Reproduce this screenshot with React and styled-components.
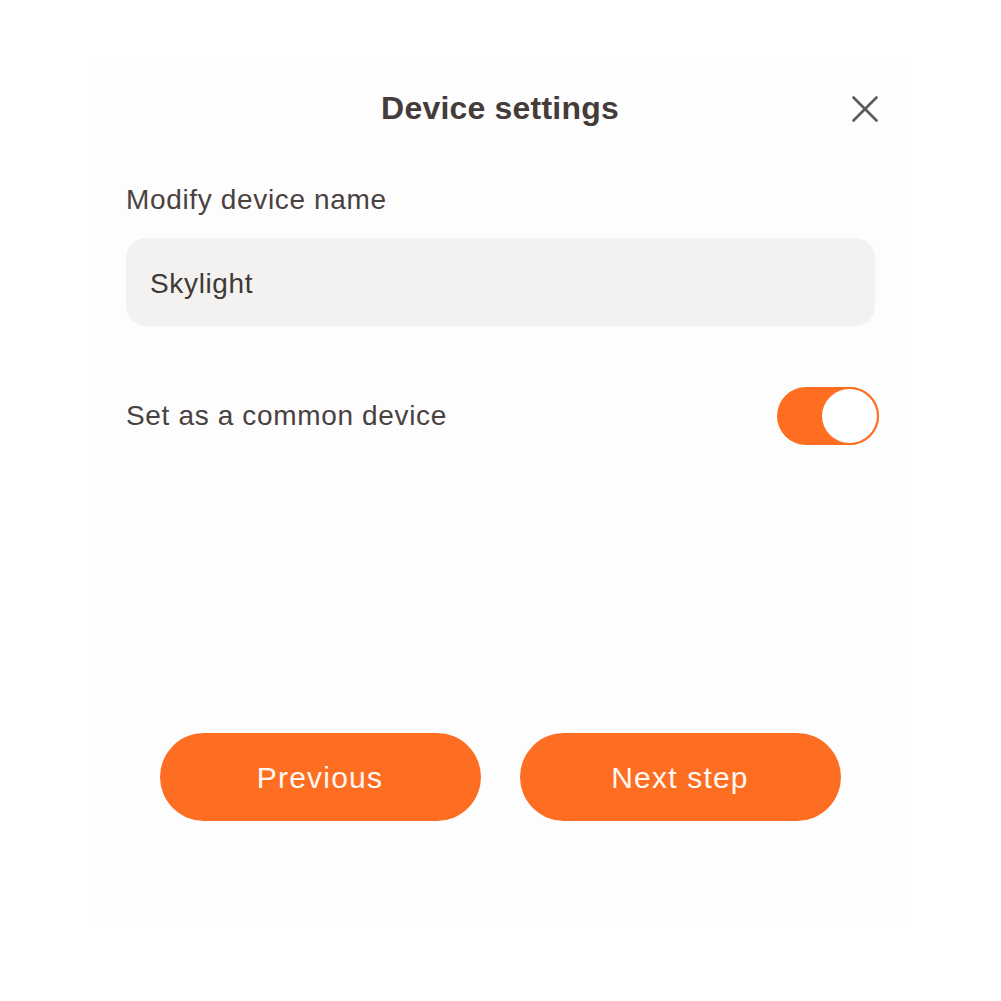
import React, { useState } from 'react';
import styled, { createGlobalStyle } from 'styled-components';

const GlobalStyle = createGlobalStyle`
    body {
        margin: 0;
        background: #ffffff;
        font-family: "Liberation Sans", Arial, sans-serif;
    }
`

const ORANGE = '#fd6e23';

const DeviceSettings = () => {
    const [name, setName] = useState('Skylight');
    const [common, setCommon] = useState(true);

    return (
        <Page>
            <GlobalStyle />
            <Card>
                <Header>
                    <Title>Device settings</Title>
                    <CloseBtn aria-label="close">
                        <svg width="28" height="28" viewBox="0 0 28 28">
                            <path d="M2.5 2.5 L25.5 25.5 M25.5 2.5 L2.5 25.5" stroke="#5c5957" strokeWidth="2.6" strokeLinecap="round" fill="none" />
                        </svg>
                    </CloseBtn>
                </Header>
                <Body>
                    <Label>Modify device name</Label>
                    <NameInput value={name} onChange={(e) => setName(e.target.value)} />
                    <SwitchRow>
                        <Label>Set as a common device</Label>
                        <Toggle $on={common} onClick={() => setCommon(!common)}>
                            <Knob $on={common} />
                        </Toggle>
                    </SwitchRow>
                </Body>
                <Footer>
                    <BtnPill>Previous</BtnPill>
                    <BtnPill>Next step</BtnPill>
                </Footer>
            </Card>
        </Page>
    );
};

const Page = styled.div`
    padding: 63px 0 0 88px;
`
const Card = styled.div`
    width: 824px;
    height: 864px;
    box-sizing: border-box;
    background: #fdfdfd;
    border-radius: 10px;
    display: flex;
    flex-direction: column;
`
const Header = styled.div`
    position: relative;
    height: 90px;
    display: flex;
    align-items: center;
    justify-content: center;
`
const Title = styled.h1`
    margin: 0;
    font-size: 32px;
    font-weight: 700;
    letter-spacing: 0.2px;
    color: #453c39;
`
const CloseBtn = styled.button`
    position: absolute;
    right: 33px;
    top: 32px;
    width: 28px;
    height: 28px;
    padding: 0;
    border: none;
    background: none;
    display: flex;
    cursor: pointer;
`
const Body = styled.div`
    padding: 29px 37px 0 38px;
    display: flex;
    flex-direction: column;
`
const Label = styled.span`
    font-size: 28px;
    line-height: 36px;
    letter-spacing: 0.65px;
    color: #4a423f;
`
const NameInput = styled.input`
    margin-top: 20px;
    height: 88px;
    box-sizing: border-box;
    border: none;
    outline: none;
    border-radius: 20px;
    background: #f3f2f0;
    padding: 3px 24px 0;
    font-family: "Liberation Sans", Arial, sans-serif;
    font-size: 28px;
    letter-spacing: 0.65px;
    color: #403936;
`
const SwitchRow = styled.div`
    margin-top: 61px;
    display: flex;
    align-items: center;
    justify-content: space-between;
    margin-right: -4px;
`
const Toggle = styled.div`
    width: 102px;
    height: 58px;
    box-sizing: border-box;
    border-radius: 29px;
    background: ${props => props.$on ? ORANGE : '#dcdcdc'};
    display: flex;
    justify-content: ${props => props.$on ? 'flex-end' : 'flex-start'};
    cursor: pointer;
`
const Knob = styled.div`
    width: 59px;
    height: 58px;
    box-sizing: border-box;
    border-radius: 50%;
    background: #ffffff;
    border: 2.5px solid ${props => props.$on ? ORANGE : '#dcdcdc'};
`
const Footer = styled.div`
    margin-top: auto;
    padding-bottom: 106px;
    display: flex;
    justify-content: center;
    gap: 39px;
`
const BtnPill = styled.button`
    width: 321px;
    height: 88px;
    border: none;
    border-radius: 44px;
    background: ${ORANGE};
    color: #fff8f2;
    padding: 2px 0 0;
    font-family: "Liberation Sans", Arial, sans-serif;
    font-size: 30px;
    letter-spacing: 1.2px;
    cursor: pointer;
`

export default DeviceSettings;
